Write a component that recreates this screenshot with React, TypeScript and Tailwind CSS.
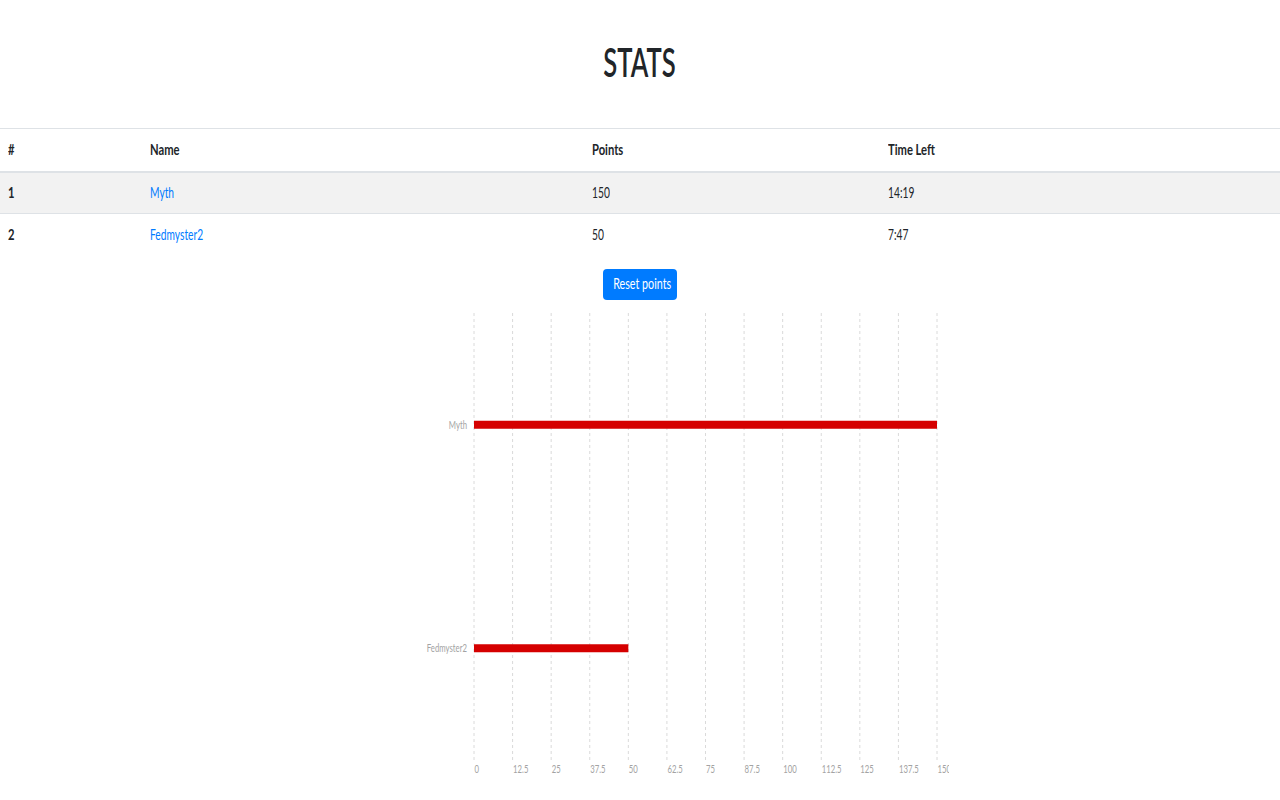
import React from 'react';

const players = [
  { rank: 1, name: 'Myth', points: 150, time: '14:19' },
  { rank: 2, name: 'Fedmyster2', points: 50, time: '7:47' },
];

const ticks = [0, 12.5, 25, 37.5, 50, 62.5, 75, 87.5, 100, 112.5, 125, 137.5, 150];

// the page text is set in a narrow face; squeeze a regular one
const Narrow = ({ children, className = 'scale-x-[0.64] origin-left' }: { children: React.ReactNode; className?: string }) => (
  <span className={`inline-block ${className}`}>{children}</span>
);

const Chart = () => {
  const left = 74;
  const width = 463;
  const height = 447;
  const band = height / players.length;
  const max = 150;

  return (
    <svg width="549" height="470" className="block" viewBox="0 0 549 470" fontFamily="Lato, sans-serif" fontSize="10.5" fill="#a3a3a3">
      {ticks.map((t) => {
        const x = left + (t / max) * width;
        return (
          <g key={t}>
            <line x1={x} y1={0} x2={x} y2={height} stroke="#dadada" strokeWidth="1" strokeDasharray="3 3" />
            <g transform={`translate(${x + 0.5} ${height + 13}) scale(0.74 1)`}>
              <text>{t}</text>
            </g>
          </g>
        );
      })}
      {players.map((p, i) => {
        const cy = band * i + band / 2;
        return (
          <g key={p.name}>
            <g transform={`translate(${left - 7} ${cy + 4}) scale(0.74 1)`}>
              <text textAnchor="end">{p.name}</text>
            </g>
            <rect x={left} y={cy - 4} width={(p.points / max) * width} height="8" fill="#d50000" />
          </g>
        );
      })}
    </svg>
  );
}

export default function App() {
  const head = 'scale-x-[0.7] origin-left';

  return (
    <div className="min-h-screen bg-white text-[#212529] font-['Lato',sans-serif]">
      <h1 className="pt-[38px] pb-[42px] text-center text-[40px] leading-[48px] font-semibold">
        <Narrow className="scale-x-[0.64] origin-center">STATS</Narrow>
      </h1>

      <table className="w-full border-collapse text-[16px]">
        <thead>
          <tr className="border-t border-[#dee2e6] border-b-2">
            <th className="w-[142px] h-[43px] px-2 pb-[2px] text-left font-bold"><Narrow className={head}>#</Narrow></th>
            <th className="w-[442px] px-2 pb-[2px] text-left font-bold"><Narrow className={head}>Name</Narrow></th>
            <th className="w-[296px] px-2 pb-[2px] text-left font-bold"><Narrow className={head}>Points</Narrow></th>
            <th className="px-2 pb-[2px] text-left font-bold"><Narrow className={head}>Time Left</Narrow></th>
          </tr>
        </thead>
        <tbody>
          {players.map((p, i) => (
            <tr key={p.rank} className={`border-t border-[#dee2e6] ${i % 2 === 0 ? 'bg-[#f2f2f2]' : ''}`}>
              <td className="h-[42px] px-2 pb-[2px] font-bold"><Narrow className={head}>{p.rank}</Narrow></td>
              <td className="px-2 pb-[2px] text-[#007bff]"><Narrow>{p.name}</Narrow></td>
              <td className="px-2 pb-[2px]"><Narrow>{p.points}</Narrow></td>
              <td className="px-2 pb-[2px]"><Narrow>{p.time}</Narrow></td>
            </tr>
          ))}
        </tbody>
      </table>

      <div className="flex justify-center pt-[13px]">
        <button className="w-[74px] h-[31px] rounded bg-[#007bff] text-white text-[14.5px] whitespace-nowrap">
          <Narrow className="scale-x-[0.74] origin-center">Reset points</Narrow>
        </button>
      </div>

      <div className="pl-[400px] pt-[13px]">
        <Chart />
      </div>
    </div>
  );
}
